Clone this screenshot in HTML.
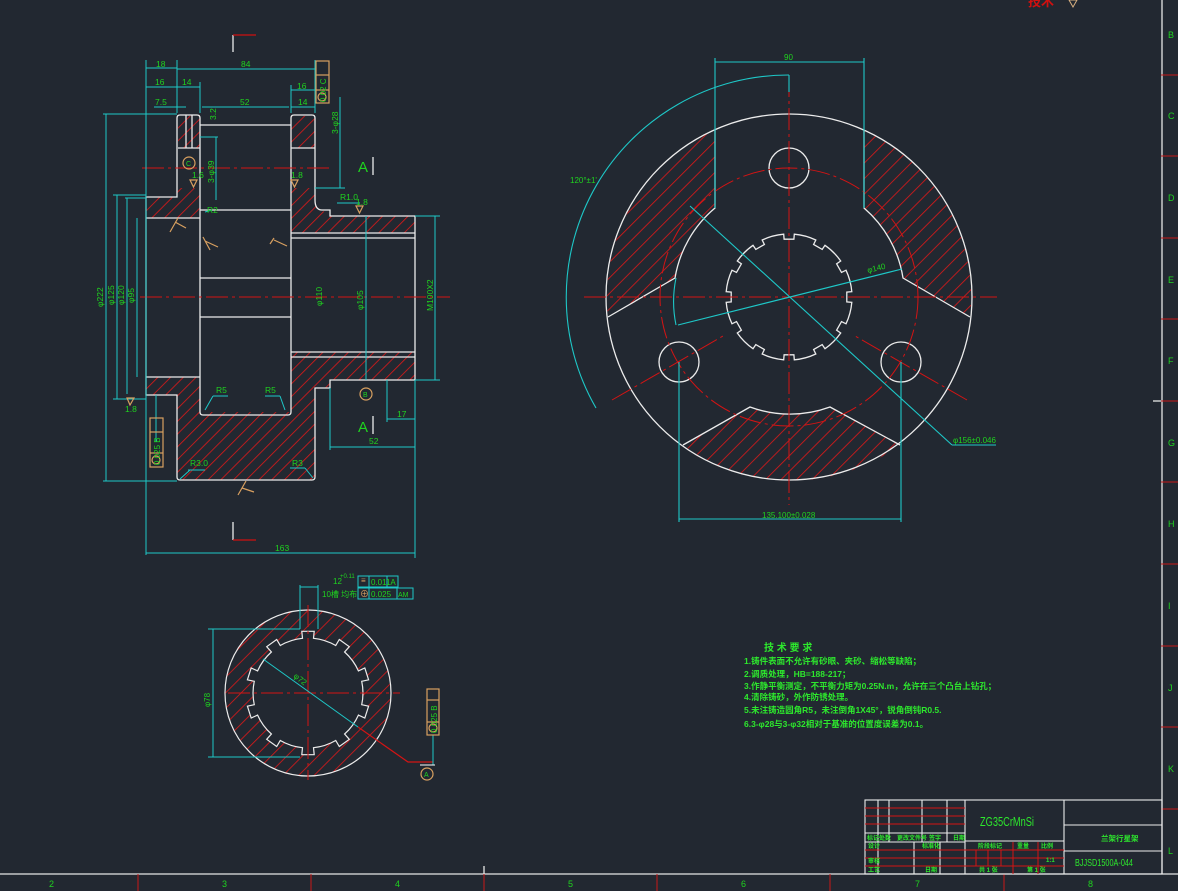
<!DOCTYPE html>
<html><head><meta charset="utf-8"><style>
html,body{margin:0;padding:0;background:#222831;}
svg{display:block}
text{font-family:"Liberation Sans","Noto Sans CJK SC",sans-serif;}
</style></head><body>
<svg id="s" width="1178" height="891" viewBox="0 0 1178 891" xmlns="http://www.w3.org/2000/svg">
<defs>
<pattern id="h" width="9" height="9" patternUnits="userSpaceOnUse" patternTransform="rotate(45)">
<line x1="0" y1="0" x2="0" y2="9" stroke="#e01818" stroke-width="1.6"/>
</pattern>
<pattern id="h2" width="11" height="11" patternUnits="userSpaceOnUse" patternTransform="rotate(45)">
<line x1="0" y1="0" x2="0" y2="11" stroke="#e01818" stroke-width="1.6"/>
</pattern>
</defs>
<rect width="1178" height="891" fill="#222831"/>

<!-- border -->
<g stroke="#e6e6e6" stroke-width="1.3" fill="none">
<line x1="1162" y1="0" x2="1162" y2="874"/>
<line x1="0" y1="874" x2="1178" y2="874"/>
<line x1="484" y1="866" x2="484" y2="874"/>
<line x1="1153" y1="401" x2="1162" y2="401"/>
</g>
<g stroke="#c81818" stroke-width="1">
<line x1="1161" y1="75" x2="1178" y2="75"/><line x1="1161" y1="156" x2="1178" y2="156"/><line x1="1161" y1="238" x2="1178" y2="238"/><line x1="1161" y1="319" x2="1178" y2="319"/><line x1="1161" y1="401" x2="1178" y2="401"/><line x1="1161" y1="482" x2="1178" y2="482"/><line x1="1161" y1="564" x2="1178" y2="564"/><line x1="1161" y1="646" x2="1178" y2="646"/><line x1="1161" y1="727" x2="1178" y2="727"/><line x1="1161" y1="809" x2="1178" y2="809"/>
<line x1="138" y1="874" x2="138" y2="891"/><line x1="311" y1="874" x2="311" y2="891"/><line x1="484" y1="874" x2="484" y2="891"/><line x1="657" y1="874" x2="657" y2="891"/><line x1="830" y1="874" x2="830" y2="891"/><line x1="1004" y1="874" x2="1004" y2="891"/>
</g>
<g fill="#1fd41f" font-size="9">
<text x="1168" y="38">B</text><text x="1168" y="119">C</text><text x="1168" y="201">D</text><text x="1168" y="283">E</text><text x="1168" y="364">F</text><text x="1168" y="446">G</text><text x="1168" y="527">H</text><text x="1168" y="609">I</text><text x="1168" y="691">J</text><text x="1168" y="772">K</text><text x="1168" y="854">L</text>
<text x="49" y="887">2</text><text x="222" y="887">3</text><text x="395" y="887">4</text><text x="568" y="887">5</text><text x="741" y="887">6</text><text x="915" y="887">7</text><text x="1088" y="887">8</text>
</g>
<text x="1028" y="6" fill="#d01010" font-size="13" font-weight="bold">技术</text>
<path d="M1069,0 L1077,0 L1073,7 Z" fill="none" stroke="#d8b080" stroke-width="1"/>

<!-- ============ LEFT SECTION VIEW ============ -->
<g fill="url(#h)" stroke="none">
<rect x="178" y="116" width="22" height="32"/>
<rect x="291" y="116" width="24" height="32"/>
<path d="M146,197 L177,197 L177,188 L200,188 L200,218 L146,218 Z"/>
<path d="M291,188 L315,188 L315,205 L330,216 L415,216 L415,233 L291,233 Z"/>
<path d="M146,377 L200,377 L200,412 L291,412 L291,352 L415,352 L415,380 L330,380 L330,388 L315,388 L315,480 L177,480 L177,395 L146,395 Z"/>
</g>
<g stroke="#ececec" stroke-width="1.3" fill="none">
<path d="M146,197 L177,197 L177,118 Q177,115 180,115 L197,115 Q200,115 200,118 L200,412 Q200,415 203,415 L288,415 Q291,415 291,412 L291,118 Q291,115 294,115 L312,115 Q315,115 315,118 L315,200 Q315,210 322,210 L330,210 L330,216 L415,216 L415,380 L330,380 L330,388 L315,388 L315,477 Q315,480 312,480 L180,480 Q177,480 177,477 L177,395 L146,395 Z"/>
<line x1="146" y1="218" x2="200" y2="218"/><line x1="146" y1="377" x2="200" y2="377"/>
<line x1="200" y1="125" x2="291" y2="125"/><line x1="200" y1="210" x2="291" y2="210"/>
<line x1="200" y1="278" x2="291" y2="278"/><line x1="200" y1="317" x2="291" y2="317"/>
<line x1="291" y1="233" x2="415" y2="233"/><line x1="291" y1="238" x2="415" y2="238"/>
<line x1="291" y1="357" x2="415" y2="357"/><line x1="291" y1="352" x2="415" y2="352"/>
<line x1="291" y1="148" x2="315" y2="148"/><line x1="178" y1="148" x2="200" y2="148"/>
<line x1="186" y1="115" x2="186" y2="148"/><line x1="192" y1="115" x2="192" y2="148"/>
<line x1="233" y1="35" x2="233" y2="52"/><line x1="233" y1="522" x2="233" y2="540"/>
<line x1="373" y1="157" x2="373" y2="175"/><line x1="373" y1="416" x2="373" y2="434"/>
</g>
<line x1="233" y1="540" x2="256" y2="540" stroke="#d01010" stroke-width="1.3"/>
<line x1="233" y1="35" x2="256" y2="35" stroke="#d01010" stroke-width="1.3"/>
<g stroke="#d41414" stroke-width="1" stroke-dasharray="22,4,3,4">
<line x1="140" y1="297" x2="450" y2="297"/>
<line x1="142" y1="168" x2="330" y2="168"/>
</g>
<!-- cyan dims -->
<g stroke="#1ec8c8" stroke-width="1" fill="none">
<line x1="146" y1="60" x2="146" y2="555"/><line x1="177" y1="60" x2="177" y2="113"/><line x1="315" y1="60" x2="315" y2="113"/>
<line x1="200" y1="82" x2="200" y2="113"/><line x1="291" y1="85" x2="291" y2="113"/>
<line x1="146" y1="68" x2="177" y2="68"/><line x1="177" y1="69" x2="315" y2="69"/>
<line x1="146" y1="87" x2="177" y2="87"/><line x1="177" y1="87" x2="200" y2="87"/>
<line x1="154" y1="107" x2="186" y2="107"/><line x1="202" y1="107" x2="289" y2="107"/>
<line x1="291" y1="90" x2="315" y2="90"/><line x1="291" y1="107" x2="315" y2="107"/>
<line x1="103" y1="114" x2="177" y2="114"/><line x1="103" y1="481" x2="177" y2="481"/>
<line x1="106" y1="114" x2="106" y2="481"/>
<line x1="113" y1="195" x2="146" y2="195"/><line x1="113" y1="399" x2="146" y2="399"/>
<line x1="117" y1="195" x2="117" y2="399"/>
<line x1="127" y1="198" x2="127" y2="394"/><line x1="125" y1="198" x2="146" y2="198"/>
<line x1="137" y1="218" x2="137" y2="377"/>
<line x1="340" y1="97" x2="340" y2="188"/><line x1="315" y1="188" x2="345" y2="188"/>
<line x1="200" y1="137" x2="218" y2="137"/><line x1="216" y1="137" x2="216" y2="200"/>
<line x1="415" y1="216" x2="440" y2="216"/><line x1="415" y1="380" x2="440" y2="380"/><line x1="435" y1="216" x2="435" y2="380"/>
<line x1="415" y1="380" x2="415" y2="558"/><line x1="330" y1="388" x2="330" y2="450"/>
<line x1="330" y1="447" x2="415" y2="447"/><line x1="387" y1="380" x2="387" y2="422"/><line x1="387" y1="419" x2="415" y2="419"/>
<line x1="146" y1="553" x2="415" y2="553"/>
<line x1="366" y1="216" x2="366" y2="380"/>
<line x1="205" y1="212" x2="212" y2="210"/>
<line x1="337" y1="203" x2="360" y2="203"/>
<line x1="213" y1="396" x2="228" y2="396"/><line x1="205" y1="410" x2="213" y2="396"/>
<line x1="265" y1="396" x2="280" y2="396"/><line x1="280" y1="396" x2="285" y2="410"/>
<line x1="188" y1="470" x2="205" y2="470"/><line x1="180" y1="479" x2="190" y2="470"/>
<line x1="290" y1="468" x2="305" y2="468"/><line x1="305" y1="468" x2="313" y2="478"/>
<line x1="156" y1="442" x2="156" y2="395"/>
</g>
<g fill="#1fd41f" font-size="8.5">
<text x="156" y="67">18</text><text x="241" y="67">84</text>
<text x="155" y="85">16</text><text x="182" y="85">14</text>
<text x="155" y="105">7.5</text><text x="240" y="105">52</text>
<text x="297" y="89">16</text><text x="298" y="105">14</text>
<text x="192" y="178">1.6</text><text x="291" y="178">1.8</text>
<text x="340" y="200">R1.0</text><text x="356" y="205">1.8</text>
<text x="207" y="213">R2</text>
<text x="216" y="393">R5</text><text x="265" y="393">R5</text>
<text x="190" y="466">R3.0</text><text x="292" y="466">R3</text>
<text x="125" y="412">1.8</text>
<text x="369" y="444">52</text><text x="397" y="417">17</text>
<text x="275" y="551">163</text>
<text transform="translate(103,307) rotate(-90)">φ222</text>
<text transform="translate(114,305) rotate(-90)">φ125</text>
<text transform="translate(124,305) rotate(-90)">φ120</text>
<text transform="translate(134,303) rotate(-90)">φ95</text>
<text transform="translate(322,306) rotate(-90)">φ110</text>
<text transform="translate(363,310) rotate(-90)">φ105</text>
<text transform="translate(433,311) rotate(-90)">M100X2</text>
<text transform="translate(214,183) rotate(-90)">3-φ39</text>
<text transform="translate(338,134) rotate(-90)">3-φ28</text>
<text transform="translate(216,120) rotate(-90)">3.2</text>
<text x="358" y="172" font-size="15">A</text><text x="358" y="432" font-size="15">A</text>
</g>
<g fill="none" stroke="#d8a060" stroke-width="1.2">
<rect x="316" y="61" width="13" height="42"/><line x1="316" y1="75" x2="329" y2="75"/><line x1="316" y1="90" x2="329" y2="90"/>
<circle cx="322" cy="97" r="4"/>
<rect x="150" y="418" width="13" height="49"/><line x1="150" y1="432" x2="163" y2="432"/><line x1="150" y1="453" x2="163" y2="453"/>
<circle cx="156" cy="460" r="4"/>
<circle cx="189" cy="163" r="6"/><circle cx="366" cy="394" r="6"/>
<path d="M190,180 L197,180 L193.5,187 Z M291,180 L298,180 L294.5,187 Z M356,206 L363,206 L359.5,213 Z M127,398 L134,398 L130,405 Z"/>
<path d="M170,232 L178,218 M175,222 L186,228 M203,237 L210,250 M205,241 L218,247 M274,238 L270,244 M274,240 L287,246 M238,495 L246,481 M242,488 L254,492 M210,397"/>
</g>
<g fill="#1fd41f" font-size="8"><text transform="translate(326,102) rotate(-90)">0.02 C</text><text transform="translate(160,465) rotate(-90)">0.025 B</text>
<text x="186" y="166" font-size="7">C</text><text x="363" y="397" font-size="7">B</text></g>

<!-- ============ RIGHT CIRCLE VIEW ============ -->
<g fill="url(#h2)">
<path d="M715,130 L715,208 A116,116 0 0 0 675,278 L608,317 A183,183 0 0 1 715,130 Z"/>
<path d="M864,130 L864,208 A116,116 0 0 1 903,278 L970,317 A183,183 0 0 0 864,130 Z"/>
<path d="M683,445 L750,407 A116,116 0 0 0 830,407 L900,445 A183,183 0 0 1 683,445 Z"/>
</g>
<g stroke="#ececec" stroke-width="1.3" fill="none">
<circle cx="789" cy="297" r="183"/>
<path d="M715,130 L715,208 A116,116 0 0 0 675,278 L608,317"/>
<path d="M864,130 L864,208 A116,116 0 0 1 903,278 L970,317"/>
<path d="M683,445 L750,407 A116,116 0 0 0 830,407 L900,445"/>
<circle cx="789" cy="168" r="20"/><circle cx="679" cy="362" r="20"/><circle cx="901" cy="362" r="20"/>
<path id="spl1" d=""/>
</g>
<g stroke="#d41414" stroke-width="1" fill="none" stroke-dasharray="22,4,3,4">
<circle cx="789" cy="297" r="129"/>
<line x1="584" y1="297" x2="997" y2="297"/><line x1="789" y1="75" x2="789" y2="505"/>
<line x1="612" y1="400" x2="723" y2="336"/><line x1="967" y1="400" x2="855" y2="336"/>
</g>
<g stroke="#1ec8c8" stroke-width="1.1" fill="none">
<path d="M789,75 A222,222 0 0 0 596,408"/>
<line x1="789" y1="75" x2="789" y2="92"/>
<line x1="715" y1="58" x2="715" y2="208"/><line x1="864" y1="58" x2="864" y2="208"/>
<line x1="715" y1="62" x2="864" y2="62"/>
<line x1="679" y1="362" x2="679" y2="522"/><line x1="901" y1="362" x2="901" y2="522"/>
<line x1="679" y1="519" x2="901" y2="519"/>
<line x1="690" y1="206" x2="952" y2="445"/><line x1="952" y1="445" x2="996" y2="445"/>
<line x1="678" y1="325" x2="902" y2="269"/>
<path d="M676,325 A116,116 0 0 1 676,278"/>
</g>
<g fill="#1fd41f" font-size="8">
<text x="784" y="60">90</text>
<text x="570" y="183">120°±1'</text>
<text x="868" y="273" transform="rotate(-14,868,273)">φ140</text>
<text x="953" y="443">φ156±0.046</text>
<text x="762" y="518">135.100±0.028</text>
</g>

<!-- ============ BOTTOM CIRCLE VIEW ============ -->
<g fill="url(#h2)">
<path id="ring2" fill-rule="evenodd" d=""/>
</g>
<g stroke="#ececec" stroke-width="1.2" fill="none">
<circle cx="308" cy="693" r="83"/>
<path id="spl2" d=""/>
</g>
<g stroke="#d41414" stroke-width="1" fill="none" stroke-dasharray="22,4,3,4">
<line x1="228" y1="693" x2="400" y2="693"/><line x1="308" y1="605" x2="308" y2="780"/>
</g>
<path d="M358,727 L408,762 L433,762" stroke="#d41414" stroke-width="1.2" fill="none"/>
<g stroke="#1ec8c8" stroke-width="1" fill="none">
<line x1="263" y1="659" x2="358" y2="727"/>
<line x1="208" y1="629" x2="300" y2="629"/><line x1="208" y1="757" x2="300" y2="757"/>
<line x1="213" y1="629" x2="213" y2="757"/>
<line x1="300" y1="585" x2="300" y2="629"/><line x1="318" y1="585" x2="318" y2="629"/>
<line x1="300" y1="587" x2="318" y2="587"/>
<line x1="433" y1="735" x2="433" y2="765"/>
<rect x="358" y="576" width="40" height="11"/><line x1="369" y1="576" x2="369" y2="587"/><line x1="387" y1="576" x2="387" y2="587"/>
<rect x="358" y="588" width="55" height="11"/><line x1="369" y1="588" x2="369" y2="599"/><line x1="397" y1="588" x2="397" y2="599"/>
</g>
<g fill="none" stroke="#d8a060" stroke-width="1.2">
<rect x="427" y="689" width="12" height="46"/><line x1="427" y1="700" x2="439" y2="700"/><line x1="427" y1="722" x2="439" y2="722"/><circle cx="433" cy="728" r="4"/>
<circle cx="427" cy="774" r="6"/>
</g>
<line x1="420" y1="765" x2="435" y2="765" stroke="#fff" stroke-width="1"/>
<g fill="#1fd41f" font-size="8">
<text x="333" y="584">12</text><text x="340" y="578" font-size="6">+0.11</text>
<text x="322" y="597">10槽 均布</text>
<text x="371" y="585">0.011A</text><text x="371" y="597">0.025</text><text x="398" y="597" font-size="7">AM</text>
<text transform="translate(210,707) rotate(-90)">φ78</text>
<text transform="translate(293,677) rotate(38)">φ72</text>
<text transform="translate(437,733) rotate(-90)">0.025 B</text>
<text x="424" y="777" font-size="7">A</text>
</g>
<text x="361" y="583" fill="#d8a060" font-size="8">≡</text>
<text x="360" y="597" fill="#d8a060" font-size="9">⊕</text>

<!-- ============ TECH REQUIREMENTS ============ -->
<g fill="#2de82d" font-size="8.5" font-weight="bold">
<text x="764" y="651" font-size="10">技 术 要 求</text>
<text x="744" y="664">1.铸件表面不允许有砂眼、夹砂、缩松等缺陷；</text>
<text x="744" y="677">2.调质处理，HB=188-217；</text>
<text x="744" y="689">3.作静平衡测定，不平衡力矩为0.25N.m，允许在三个凸台上钻孔；</text>
<text x="744" y="700">4.清除铸砂，外作防锈处理。</text>
<text x="744" y="713">5.未注铸造圆角R5，未注倒角1X45°，锐角倒钝R0.5.</text>
<text x="744" y="727">6.3-φ28与3-φ32相对于基准的位置度误差为0.1。</text>
</g>

<!-- ============ TITLE BLOCK ============ -->
<g stroke="#ececec" stroke-width="1.1" fill="none">
<rect x="865" y="800" width="297" height="74"/>
<line x1="965" y1="800" x2="965" y2="874"/><line x1="1064" y1="800" x2="1064" y2="874"/>
<line x1="1064" y1="825" x2="1162" y2="825"/><line x1="1064" y1="851" x2="1162" y2="851"/>
<line x1="865" y1="833" x2="965" y2="833"/><line x1="865" y1="842" x2="965" y2="842"/>
<line x1="965" y1="841" x2="1064" y2="841"/>
<line x1="878" y1="800" x2="878" y2="874"/><line x1="889" y1="800" x2="889" y2="842"/>
<line x1="922" y1="800" x2="922" y2="842"/><line x1="947" y1="800" x2="947" y2="842"/>
<line x1="914" y1="842" x2="914" y2="874"/><line x1="940" y1="842" x2="940" y2="874"/>
</g>
<g stroke="#d41414" stroke-width="1">
<line x1="865" y1="808" x2="965" y2="808"/><line x1="865" y1="816" x2="965" y2="816"/><line x1="865" y1="824" x2="965" y2="824"/>
<line x1="865" y1="850" x2="1064" y2="850"/><line x1="865" y1="858" x2="1064" y2="858"/><line x1="865" y1="866" x2="1064" y2="866"/>
<line x1="976" y1="850" x2="976" y2="866"/><line x1="988" y1="850" x2="988" y2="866"/><line x1="1001" y1="850" x2="1001" y2="866"/>
<line x1="1013" y1="842" x2="1013" y2="874"/><line x1="1038" y1="842" x2="1038" y2="874"/>
</g>
<g fill="#2de82d" font-size="6" font-weight="bold">
<text x="867" y="840">标记</text><text x="879" y="840">处数</text><text x="897" y="840">更改文件号</text><text x="929" y="840">签字</text><text x="953" y="840">日期</text>
<text x="868" y="848">设计</text><text x="922" y="848">标准化</text>
<text x="868" y="863">审核</text><text x="868" y="872">工艺</text><text x="925" y="872">日期</text>
<text x="978" y="848">阶段标记</text><text x="1017" y="848">重量</text><text x="1041" y="848">比例</text>
<text x="1046" y="862">1:1</text><text x="979" y="872">共 1 张</text><text x="1027" y="872">第 1 张</text>
</g>
<text x="980" y="826" fill="#2de82d" font-size="13" textLength="54" lengthAdjust="spacingAndGlyphs">ZG35CrMnSi</text>
<text x="1101" y="841" fill="#2de82d" font-size="7.5" font-weight="bold">兰架行星架</text>
<text x="1075" y="866" fill="#2de82d" font-size="10" textLength="58" lengthAdjust="spacingAndGlyphs">BJJSD1500A-044</text>
</svg>
<script>
function spline(cx,cy,rb,rn,n,w,off){var d="";for(var i=0;i<n;i++){var a=off+i*2*Math.PI/n,h=w/2;var pts=[[a-h,rb],[a-h,rn],[a+h,rn],[a+h,rb]];pts.forEach(function(p,j){var x=cx+p[1]*Math.cos(p[0]),y=cy+p[1]*Math.sin(p[0]);d+=(i==0&&j==0?"M":"L")+x.toFixed(1)+","+y.toFixed(1)+" ";});var nx=off+(i+1)*2*Math.PI/n-h;d+="A"+rb+","+rb+" 0 0 1 "+(cx+rb*Math.cos(nx)).toFixed(1)+","+(cy+rb*Math.sin(nx)).toFixed(1)+" ";}return d+"Z";}
var s1=spline(789,297,63,58,12,0.17,-Math.PI/2);
document.getElementById("spl1").setAttribute("d",s1);
var s2=spline(308,693,55,62,10,0.2,-Math.PI/2);
document.getElementById("spl2").setAttribute("d",s2);
document.getElementById("ring2").setAttribute("d","M391,693 A83,83 0 1 0 225,693 A83,83 0 1 0 391,693 Z "+s2);
</script>
</body></html>
